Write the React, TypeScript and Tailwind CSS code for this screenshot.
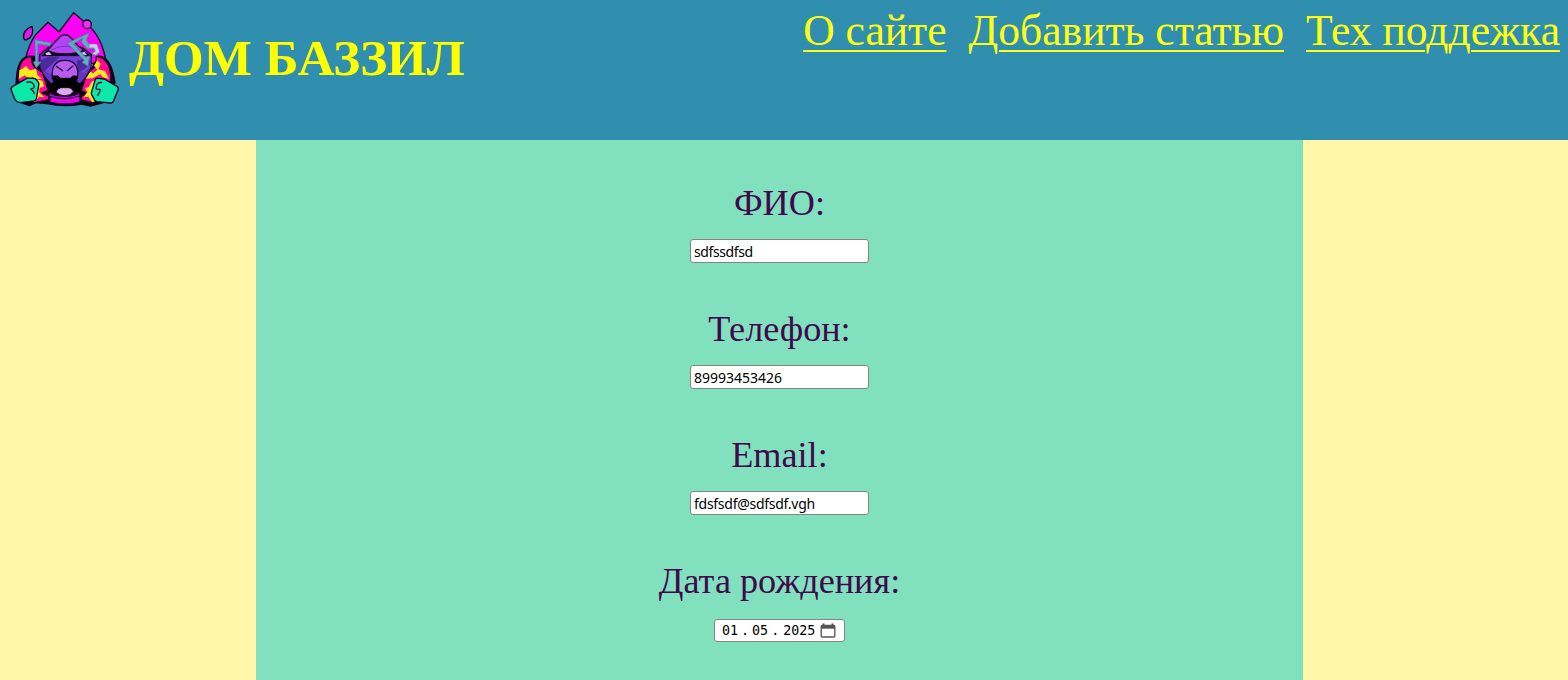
import React from 'react';

function Logo() {
  return (
    <svg viewBox="0 0 390 360" className="h-[120px] w-[130px] shrink-0" stroke="#160020" strokeWidth="4" strokeLinejoin="round" strokeLinecap="round">
      {/* mane */}
      <path d="M77 175C84 145 94 122 107 104L144 67L177 96L221 38L250 63C280 85 306 122 316 174L290 190H100Z" fill="#ff00f5" />
      <circle cx="261" cy="73" r="13" fill="#f02df2" />
      <path d="M96 79C82 83 68 97 71 113C72 119 75 121 80 119C96 113 101 97 96 79Z" fill="#df19e9" />
      {/* shoulders */}
      <path d="M103 169C75 164 58 177 51 217L46 275L62 307L88 317L108 308L140 311Q195 322 244 312L272 318L310 308L345 248C337 197 324 171 296 168L270 215H125Z" fill="#0b0010" />
      <path d="M94 170C69 170 58 188 53 237L80 288L104 308L147 299L146 288L126 279L145 272L128 217L103 201L96 187Z" fill="#ff0897" />
      <path d="M289 169C322 174 332 199 333 242L306 284L278 309L244 300L243 290L262 280L244 272L260 221L285 201Z" fill="#ff0897" />
      <g stroke="none" fill="#ffe916">
        <path d="M64 208L78 199L90 211L108 206L112 224L126 237L105 236L98 230L89 240L75 226L57 236L58 211Z" />
        <path d="M110 238L128 243L132 260L119 263L117 277L133 292L117 290L104 306L91 300Z" />
        <path d="M292 181L302 191L295 208L315 213L327 237L307 231L301 222L278 235L253 236L271 215L280 220L292 209L282 197Z" />
        <path d="M255 264L266 262L275 245L290 239L282 279L294 299L277 307L265 290L250 292L262 276Z" />
      </g>
      <path d="M148 274C159 293 228 293 239 274L241 308Q195 317 150 308L147 290Z" fill="#a911ca" />
      <path d="M151 290Q195 304 239 288V307Q195 316 151 307Z" fill="#f000ef" strokeWidth="3" />
      {/* head */}
      <path d="M119 164L145 142H246L274 164L272 205Q262 232 241 251H153Q125 229 120 197Z" fill="#6534c0" />
      <path d="M125 168L139 152L165 160H228L252 154L273 167Z" fill="#11001f" stroke="none" />
      <path d="M122 170H272V200L250 220L232 205L212 179H171L154 225L123 205Z" fill="#7740dc" stroke="none" />
      <path d="M122 180L150 169L179 170L129 218L121 205ZM230 182L271 172V195L234 220Z" fill="#4c2a9b" stroke="none" />
      <path d="M143 151Q157 134 170 121C184 102 201 98 214 115L235 137L251 151Q232 161 196 162Q160 162 143 151Z" fill="#b742f3" />
      <path d="M155 149Q194 128 237 149" fill="none" stroke="#7137bd" strokeWidth="3" />
      <path d="M136 160L147 155L155 165L139 165ZM243 158L253 155L261 165L252 165Z" fill="#d8c1dc" stroke="none" />
      {/* muzzle */}
      <path d="M157 236C155 210 158 181 195 181C232 181 236 210 232 236Z" fill="#b65df0" strokeWidth="3.5" />
      <path d="M169 199L188 212M219 198L202 212" fill="none" strokeWidth="3.5" />
      <path d="M160 228H174L180 235H212L218 228H230V246L240 252V273L229 276L218 263H174L165 276L153 272V252L160 247Z" fill="#000" stroke="#000" strokeWidth="3" />
      <path d="M168 275Q173 264 183 263H207Q217 264 220 275Q212 287 195 287Q178 287 168 275Z" fill="#dcadee" strokeWidth="2.5" />
      {/* lightning marks */}
      <g stroke="#3987a8" strokeWidth="2.5" fill="#66abc0">
        <path d="M105 119L154 129L149 137L114 132L113 185L123 186L109 203L100 187L106 184Z" />
        <path d="M202 130L268 98L259 121L270 136L291 134L299 157L286 167L275 161L285 153L280 145L263 147L244 126L249 114L220 132L257 172L269 168L264 199L246 187L253 181L211 138Z" />
        <path d="M268 132L290 132L299 156L287 165L276 161L287 154L282 143L268 144Z" fill="#d0cae8" strokeWidth="1" />
      </g>
      {/* gloves */}
      <path d="M79 236Q82 233 86 234L105 236Q110 238 116 249Q117 252 116 257L109 297Q107 302 102 303L61 308Q55 308 50 304Q45 300 43 294L34 271Q31 264 37 260Z" fill="#0ce8aa" />
      <path d="M80 247Q94 243 99 251Q107 262 98 265Q89 265 96 270Q102 276 103 281" fill="none" strokeWidth="3.5" />
      <path d="M286 238Q289 234 294 235L313 237L351 259Q357 263 354 270L340 304Q337 310 331 309L291 305Q286 304 283 299L275 284Q273 280 275 275Z" fill="#0ce8aa" />
      <path d="M305 247Q292 248 290 256L288 265Q288 269 298 268Q303 268 299 276L293 286" fill="none" strokeWidth="3.5" />
    </svg>
  );
}

const links = ['О сайте', 'Добавить статью', 'Тех поддежка'];
const fields = [
  { label: 'ФИО:', value: 'sdfssdfsd', type: 'text', spacing: 'tracking-[-0.4px]' },
  { label: 'Телефон:', value: '89993453426', type: 'tel', spacing: 'tracking-[-0.02px]' },
  { label: 'Email:', value: 'fdsfsdf@sdfsdf.vgh', type: 'email', spacing: 'tracking-[-0.27px]' },
];

export default function App() {
  return (
    <div className="flex h-[680px] w-full flex-col overflow-hidden bg-[#fff6a9] font-['Liberation_Serif',serif]">
      <header className="flex h-[140px] shrink-0 items-start justify-between bg-[#308fae] pr-2 text-[#ffff14]">
        <div className="flex">
          <Logo />
          <h1 className="-ml-px pt-[28px] text-[51px] leading-[60px] font-bold whitespace-nowrap text-[#ffff00]">ДОМ БАЗЗИЛ</h1>
        </div>
        <nav className="flex gap-[22px] pt-[5px] text-[43.6px] leading-[50px] whitespace-nowrap">
          {links.map((link) => (
            <a key={link} href="#" className="underline decoration-2 underline-offset-[5px]">{link}</a>
          ))}
        </nav>
      </header>
      <main className="ml-[256px] flex w-[1047px] flex-1 flex-col items-center bg-[#81e1bf] pt-[43px]">
        {fields.map(({ label, value, type, spacing }) => (
          <label key={label} className="flex h-[126px] shrink-0 flex-col items-center text-[36.2px] leading-[41px] text-[#42084e]">
            {label}
            <input
              type={type}
              defaultValue={value}
              className={`mt-[15px] h-[24px] w-[179px] rounded-[3px] border border-[#858585] bg-white px-[3px] font-['Noto_Sans',sans-serif] text-[14px] leading-[20px] text-black ${spacing}`}
            />
          </label>
        ))}
        <div className="flex flex-col items-center text-[36.2px] leading-[41px] text-[#42084e]">
          <span>Дата рождения:</span>
          <div className="mt-[17px] flex h-[23px] w-[131px] items-center rounded-[3px] border border-[#858585] bg-white pl-[7px] font-['DejaVu_Sans_Mono',monospace] text-[13.33px] leading-[20px] text-black">
            <span>01</span>
            <span className="w-[14px] pl-[3px]">.</span>
            <span>05</span>
            <span className="w-[15px] pl-[3px]">.</span>
            <span>2025</span>
            <svg viewBox="0 0 16 15" className="ml-[5px] h-[15px] w-[16px]" fill="none" stroke="#555">
              <rect x="1.2" y="2.5" width="13.6" height="11.5" rx="1" strokeWidth="1.3" />
              <path d="M1 4H15" strokeWidth="3.4" />
              <path d="M3.5 0.5V3M12.5 0.5V3" strokeWidth="2" />
            </svg>
          </div>
        </div>
      </main>
    </div>
  );
}
